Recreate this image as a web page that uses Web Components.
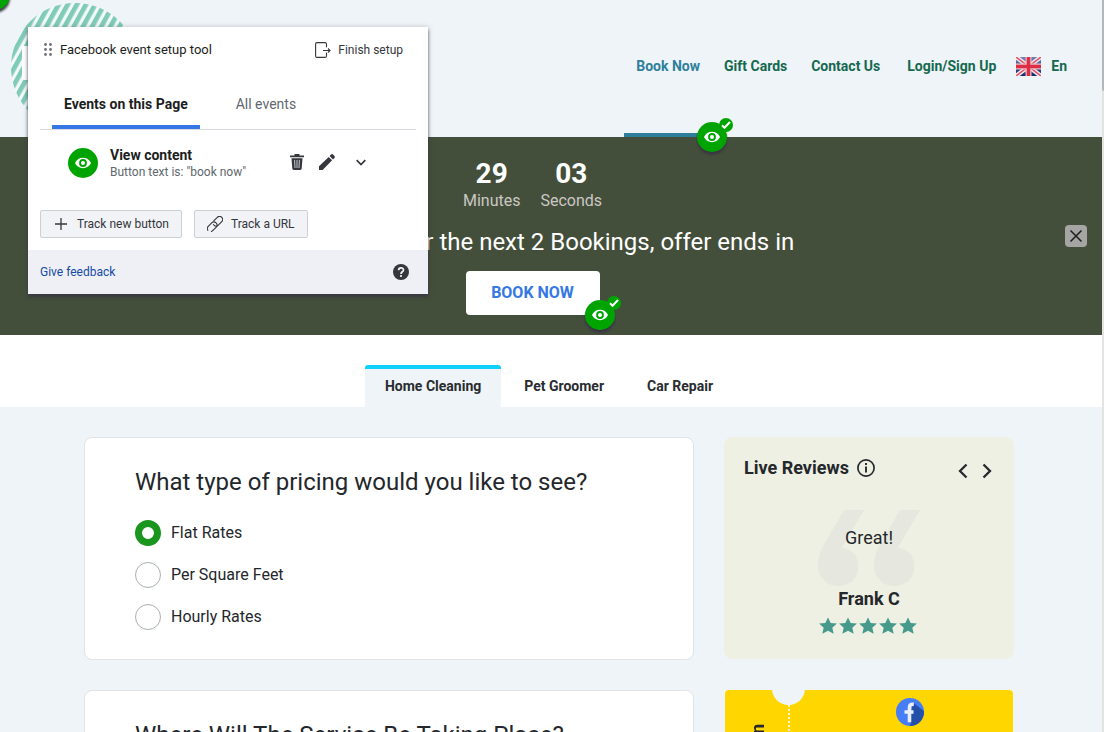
<!DOCTYPE html>
<html lang="en">
<head>
<meta charset="utf-8">
<meta name="viewport" content="width=device-width, initial-scale=1">
<title>Book Now</title>
<style>
  html, body { margin: 0; height: 100%; }
  body { font-family: Roboto, "Liberation Sans", sans-serif; color: #24272b; background: #eff4f8; overflow: hidden; }
</style>
</head>
<body>
<booking-page></booking-page>

<script>
const base = `
  *, *::before, *::after { box-sizing: border-box; }
  button { font: inherit; color: inherit; background: none; border: 0; padding: 0; margin: 0; cursor: pointer; }
  a { color: inherit; text-decoration: none; }
  h1, h2, h3, p, ul, fieldset { margin: 0; padding: 0; border: 0; }
  ul { list-style: none; }
  svg { display: block; flex: none; }
`;
function define(name, css, html) {
  const template = document.createElement('template');
  template.innerHTML = `<style>${base}${css}</style>${html}`;
  customElements.define(name, class extends HTMLElement {
    constructor() {
      super();
      this.attachShadow({ mode: 'open' }).append(template.content.cloneNode(true));
    }
  });
}

const eye = `<path d="M7 15c1.600-3.400 4.500-5.200 8-5.200s6.400 1.800 8 5.200c-1.600 3.400-4.500 5.200-8 5.200s-6.400-1.800-8-5.200z" fill="#fff"/><circle cx="15" cy="15" r="3.900" fill="#00a400"/><circle cx="15" cy="15" r="2" fill="#fff"/>`;

/* Green marker pinned on a tracked control */
define('event-marker', `
  :host { display: block; width: 37px; height: 38px; }
  svg { overflow: visible; filter: drop-shadow(0 3px 1px rgba(56,54,66,.95)); }
  .tick { filter: none; position: absolute; left: 22px; top: -4px; }
  div { position: relative; }
`, `<div><svg width="30" height="30" viewBox="0 0 30 30" aria-hidden="true"><circle cx="15" cy="15" r="15" fill="#00a400"/>${eye}</svg>
<svg class="tick" width="14" height="14" viewBox="0 0 14 14" aria-hidden="true"><circle cx="7" cy="7" r="7" fill="#00a400"/><path d="M3 7.300l2.500 2.500 5.500-5.800" fill="none" stroke="#fff" stroke-width="2"/></svg></div>`);

define('site-logo', `:host { display: block; }`, `
<svg width="128" height="128" viewBox="0 0 128 128" role="img" aria-label="Company logo">
  <defs><pattern id="s" width="8" height="8" patternUnits="userSpaceOnUse" patternTransform="rotate(29)"><rect width="8" height="8" fill="#f3f8f8"/><rect width="4.700" height="8" fill="#7fcbb8"/></pattern></defs>
  <circle cx="64" cy="64" r="64" fill="url(#s)"/><rect x="11" y="43" width="106" height="34" rx="2" fill="#fff"/>
</svg>`);

define('site-header', `
  :host { display: block; background: #eff4f8; }
  header { display: flex; align-items: stretch; justify-content: space-between; height: 137px; padding: 3px 23px 0 11px; }
  nav ul { display: flex; height: 100%; }
  li { position: relative; display: flex; }
  a { display: flex; align-items: center; padding: 0 12px 8px; font-size: 14px; line-height: 20px; font-weight: 700; color: #14694f; white-space: nowrap; }
  .current a { color: #2e7f9b; border-bottom: 4px solid #2e7f9b; padding-bottom: 4px; }
  event-marker { position: absolute; left: calc(100% - 15px); bottom: -23px; z-index: 1; }
  .login { margin-left: 3px; }
  .lang { margin-left: -4px; }
  .lang a { gap: 10px; }
`, `
<header>
  <site-logo></site-logo>
  <nav aria-label="Main"><ul>
    <li class="current"><a href="#book">Book Now</a><event-marker></event-marker></li>
    <li><a href="#gifts">Gift Cards</a></li>
    <li><a href="#contact">Contact Us</a></li>
    <li class="login"><a href="#login">Login/Sign Up</a></li>
    <li class="lang"><a href="#lang">
      <svg width="25" height="19" viewBox="0 0 50 38" aria-hidden="true">
        <defs><linearGradient id="b" x2="0" y2="1"><stop stop-color="#7580b4"/><stop offset="1" stop-color="#14296b"/></linearGradient></defs>
        <rect width="50" height="38" fill="url(#b)"/>
        <path d="M0 0l50 38M50 0L0 38" stroke="#f1e8ef" stroke-width="9"/>
        <path d="M0 0l50 38M50 0L0 38" stroke="#dc5568" stroke-width="3"/>
        <path d="M25 0v38M0 19h50" stroke="#f1bcc6" stroke-width="12"/>
        <path d="M25 0v38M0 19h50" stroke="#dc2f45" stroke-width="7"/>
      </svg>En</a></li>
  </ul></nav>
</header>`);

define('offer-banner', `
  :host { display: block; background: #444f3b; color: #fff; }
  section { display: grid; grid-template-columns: 1fr 22px; align-items: center; padding: 20px 15px 20px 0; min-height: 198px; }
  .body { display: flex; flex-direction: column; align-items: center; }
  .timer { display: flex; gap: 20px; text-align: center; padding-top: 1px; }
  .num { font-size: 28px; line-height: 32px; font-weight: 700; }
  .unit { font-size: 16px; line-height: 22px; color: #cbc7c4; }
  h1 { font-size: 24px; line-height: 32px; font-weight: 400; margin: 14px 0 13px; white-space: nowrap; }
  .book { position: relative; }
  .cta { display: block; width: 134px; height: 44px; padding-bottom: 2px; border-radius: 4px; background: #fff; color: #3578e5; font-size: 16px; font-weight: 700; }
  event-marker { position: absolute; left: calc(100% - 15px); top: 29px; }
  .close { width: 22px; height: 22px; border-radius: 4px; background: #a5a5a3; display: grid; place-items: center; }
`, `
<section aria-label="Offer">
  <div class="body">
    <div class="timer">
      <div><div class="num">29</div><div class="unit">Minutes</div></div>
      <div><div class="num">03</div><div class="unit">Seconds</div></div>
    </div>
    <h1>Get 10% Off for the next 2 Bookings, offer ends in</h1>
    <div class="book"><button class="cta">BOOK NOW</button><event-marker></event-marker></div>
  </div>
  <button class="close" aria-label="Close offer"><svg width="14" height="14" viewBox="0 0 14 14"><path d="M1.500 1.500l11 11M12.500 1.500l-11 11" stroke="#222" stroke-width="1.600"/></svg></button>
</section>`);

define('service-tabs', `
  :host { display: block; background: #fff; }
  div { display: flex; justify-content: center; gap: 3px; padding: 30px 4px 0 0; }
  button { height: 42px; padding: 0 20px 4px; border-top: 4px solid transparent; border-radius: 3px 3px 0 0; font-size: 14px; font-weight: 700; color: #292c30; }
  button[aria-selected=true] { background: #eff4f8; border-top-color: #12d0fc; }
`, `
<div role="tablist">
  <button role="tab" aria-selected="true">Home Cleaning</button>
  <button role="tab" aria-selected="false">Pet Groomer</button>
  <button role="tab" aria-selected="false">Car Repair</button>
</div>`);

define('form-card', `
  :host { display: block; background: #fff; border: 1px solid #e1e4e6; border-radius: 8px; padding: 28px 50px; }
  h2, ::slotted(h2) { margin: 0; font-size: 24px; line-height: 32px; font-weight: 400; }
`, `<slot name="title"></slot><slot></slot>`);

define('rate-options', `
  :host { display: block; margin-top: 22px; padding-bottom: 1px; }
  fieldset { display: grid; gap: 16px; }
  label { display: flex; align-items: center; gap: 10px; font-size: 16px; line-height: 26px; }
  input { appearance: none; width: 26px; height: 26px; margin: 0; border: 1px solid #a9b1ae; border-radius: 50%; background: #fff; }
  input:checked { border: 7px solid #1a961f; }
`, `
<fieldset aria-label="Pricing type">
  <label><input type="radio" name="rate" checked>Flat Rates</label>
  <label><input type="radio" name="rate">Per Square Feet</label>
  <label><input type="radio" name="rate">Hourly Rates</label>
</fieldset>`);

const star = `<svg width="18" height="18" viewBox="0 0 18 18" aria-hidden="true"><path d="M9 .5l2.700 5.500 6.200.6-4.600 4.100 1.400 6.100L9 13.700l-5.700 3.100 1.400-6.100L.1 6.600l6.200-.6z" fill="#479a8b"/></svg>`;
define('live-reviews', `
  :host { display: block; background: #eef0e3; border-radius: 8px; padding: 18px 20px 24px; }
  .top { display: flex; align-items: center; justify-content: space-between; height: 26px; }
  h2 { display: flex; align-items: center; gap: 8px; font-size: 18px; line-height: 24px; font-weight: 700; }
  .arrows { display: flex; gap: 12px; padding: 5px 1px 0 0; }
  .quote { position: relative; display: flex; flex-direction: column; align-items: center; margin-top: 29px; padding: 16px 0 0; }
  .mark { position: absolute; top: 0; left: calc(50% - 51px); }
  p { position: relative; font-size: 18px; line-height: 24px; }
  h3 { position: relative; font-size: 18px; line-height: 24px; font-weight: 700; margin-top: 37px; }
  .stars { display: flex; gap: 2px; margin: 6px 2px 0 0; }
`, `
<div class="top">
  <h2>Live Reviews <svg width="18" height="18" viewBox="0 0 18 18" aria-hidden="true"><circle cx="9" cy="9" r="8.100" fill="none" stroke="#26292d" stroke-width="1.700"/><path d="M9 7.500v6M9 4v2" stroke="#26292d" stroke-width="1.900"/></svg></h2>
  <div class="arrows">
    <button aria-label="Previous review"><svg width="12" height="16" viewBox="0 0 12 16"><path d="M9.500 1.500L3 8l6.500 6.500" fill="none" stroke="#26292d" stroke-width="2.300"/></svg></button>
    <button aria-label="Next review"><svg width="12" height="16" viewBox="0 0 12 16"><path d="M2.500 1.500L9 8l-6.500 6.500" fill="none" stroke="#26292d" stroke-width="2.300"/></svg></button>
  </div>
</div>
<div class="quote">
  <svg class="mark" width="103" height="77" viewBox="0 0 103 77" aria-hidden="true"><g fill="#e6e8df"><path d="M26 0h20L24 37.500c10 1 16.500 9 16.500 18.500C40.500 68 32 76 20.300 76S0 67 0 55.500C0 46 3.500 38.500 8 31z"/><path transform="translate(56)" d="M26 0h20L24 37.500c10 1 16.500 9 16.500 18.500C40.500 68 32 76 20.300 76S0 67 0 55.500C0 46 3.500 38.500 8 31z"/></g></svg>
  <p>Great!</p>
  <h3>Frank C</h3>
  <div class="stars" role="img" aria-label="5 stars">${star.repeat(5)}</div>
</div>`);

define('coupon-card', `
  :host { display: block; margin: 0 1px; }
  article { position: relative; display: grid; grid-template-columns: 65px 1fr; background: #ffd600; border-radius: 4px; min-height: 160px; }
  .stub { border-right: 2px dotted #fff7c8; display: flex; justify-content: center; padding: 34px 0 0 2px; }
  .stub span { writing-mode: vertical-rl; transform: rotate(180deg); font-size: 18px; line-height: 24px; font-weight: 700; align-self: start; }
  .notch { position: absolute; top: -18px; left: 47px; width: 33px; height: 33px; border-radius: 50%; background: #eff4f8; }
  .main { display: flex; justify-content: center; padding: 8px 0 0 16px; }
`, `
<article>
  <div class="stub"><span>Coupon</span></div>
  <div class="main"><svg width="28" height="28" viewBox="0 0 28 28" role="img" aria-label="Facebook">
    <defs><clipPath id="c"><circle cx="14" cy="14" r="14"/></clipPath></defs>
    <circle cx="14" cy="14" r="14" fill="#477df6"/>
    <path clip-path="url(#c)" d="M17.500 5L28 13v15H13.500l1.500-3V13z" fill="#2450a8"/>
    <path d="M17.800 6.200h-1.300c-2 0-3 1.100-3 3.100v15M8.500 14h9" fill="none" stroke="#eaf0fb" stroke-width="3.600"/>
  </svg></div>
  <div class="notch"></div>
</article>`);

const icons = {
  grip: `<svg width="8" height="13" viewBox="0 0 8 13" fill="#6d7178" aria-hidden="true"><circle cx="1.500" cy="1.500" r="1.400"/><circle cx="6.500" cy="1.500" r="1.400"/><circle cx="1.500" cy="6.500" r="1.400"/><circle cx="6.500" cy="6.500" r="1.400"/><circle cx="1.500" cy="11.500" r="1.400"/><circle cx="6.500" cy="11.500" r="1.400"/></svg>`,
  exit: `<svg width="16" height="16" viewBox="0 0 16 16" fill="none" stroke="#34373c" stroke-width="1.100" aria-hidden="true"><path d="M11.500 5.300V2A1.500 1.500 0 0 0 10 .6H2A1.500 1.500 0 0 0 .6 2v12A1.500 1.500 0 0 0 2 15.400h8a1.500 1.500 0 0 0 1.500-1.400v-3.500M8 8.500h7M13 6.500l2 2-2 2"/></svg>`,
  trash: `<svg width="14" height="16" viewBox="0 0 14 16" aria-hidden="true"><path d="M4.500 0h5v1.500H14v1.800H0V1.500h4.500zM1.500 4.300h11l-.8 10.200A1.600 1.600 0 0 1 10.200 16H3.800a1.600 1.600 0 0 1-1.500-1.500z" fill="#34373c"/><path d="M4.600 6l.4 8M7 6v8M9.400 6L9 14" stroke="#d8dadf" stroke-width=".9"/></svg>`,
  pen: `<svg width="16" height="16" viewBox="0 0 16 16" fill="#34373c" aria-hidden="true"><path d="M0 12.300L9.700 2.900l3.400 3.400L3.600 16H0zM10.600 2L12 .6a1.500 1.500 0 0 1 2.100 0l1.300 1.300a1.500 1.500 0 0 1 0 2.100L14 5.400z"/></svg>`,
  down: `<svg width="10" height="7" viewBox="0 0 10 7" fill="none" stroke="#34373c" stroke-width="1.700" aria-hidden="true"><path d="M.7 1.200L5 5.500l4.300-4.300"/></svg>`,
  plus: `<svg width="12" height="12" viewBox="0 0 12 12" stroke="#34373c" stroke-width="1.300" aria-hidden="true"><path d="M6 0v12M0 6h12"/></svg>`,
  link: `<svg width="16" height="16" viewBox="0 0 16 16" fill="none" stroke="#34373c" stroke-width="1.100" aria-hidden="true"><g transform="rotate(-45 8 8)"><rect x="-1.500" y="4.900" width="11" height="6.200" rx="3.100" stroke-dasharray="21 3 5"/><rect x="6.500" y="4.900" width="11" height="6.200" rx="3.100" stroke-dasharray="8 0 17 3"/></g></svg>`,
  help: `<svg width="16" height="16" viewBox="0 0 16 16" aria-hidden="true"><circle cx="8" cy="8" r="8" fill="#34373c"/><path d="M5.600 6.300c0-3.300 4.900-3.100 4.900-.3C10.500 7.800 8 7.800 8 9.900M8 11.100v1.800" fill="none" stroke="#f4f4f8" stroke-width="1.700"/></svg>`
};

define('event-setup-tool', `
  :host { display: block; width: 400px; background: #fff; color: #1c1e21; box-shadow: 0 3px 3px rgba(56,54,66,.8), 0 0 5px rgba(56,54,66,.25); }
  .head { display: flex; align-items: center; gap: 8px; padding: 12px 25px 0 16px; font-size: 13px; line-height: 20px; }
  .head h2 { font-size: 13px; line-height: 20px; font-weight: 400; flex: 1; padding-top: 1px; }
  .finish { display: flex; align-items: center; gap: 7px; font-size: 12px; color: #34373c; }
  .tabs { display: flex; gap: 24px; margin: 23px 12px 0; padding-left: 12px; border-bottom: 1px solid #d8dadf; }
  .tabs button { height: 46px; padding: 0 12px; font-size: 14px; border-bottom: 4px solid transparent; color: #606770; }
  .tabs button[aria-selected=true] { font-weight: 700; color: #1c1e21; border-bottom-color: #3578e5; }
  .event { display: flex; align-items: center; padding: 16px 62px 0 40px; }
  .event .text { flex: 1; margin-left: 12px; white-space: nowrap; }
  .event h3 { font-size: 14px; line-height: 18px; font-weight: 700; }
  .event p { font-size: 12px; line-height: 16px; color: #606770; }
  .acts { display: flex; align-items: center; gap: 15px; padding-bottom: 2px; }
  .acts button:last-child { margin-left: 6px; }
  .btns { display: flex; gap: 12px; padding: 30px 12px 12px; }
  .btns button { display: flex; align-items: center; gap: 8px; height: 28px; padding: 0 12px; border: 1px solid #ccd0d5; border-radius: 2px; background: #f2f3f6; font-size: 12px; color: #34373c; }
  .btns .new { gap: 10px; padding-left: 14px; }
  footer { display: flex; align-items: center; justify-content: space-between; height: 44px; padding: 0 19px 0 12px; background: #eff0f5; font-size: 12px; }
  footer a { color: #164aa5; }
`, `
<div class="head">${icons.grip}<h2>Facebook event setup tool</h2><button class="finish">${icons.exit}Finish setup</button></div>
<div class="tabs" role="tablist"><button role="tab" aria-selected="true">Events on this Page</button><button role="tab" aria-selected="false">All events</button></div>
<div class="event">
  <svg width="30" height="30" viewBox="0 0 30 30" aria-hidden="true"><circle cx="15" cy="15" r="15" fill="#00a400"/>${eye}</svg>
  <div class="text"><h3>View content</h3><p>Button text is: "book now"</p></div>
  <div class="acts"><button aria-label="Delete">${icons.trash}</button><button aria-label="Edit">${icons.pen}</button><button aria-label="Expand">${icons.down}</button></div>
</div>
<div class="btns"><button class="new">${icons.plus}Track new button</button><button>${icons.link}Track a URL</button></div>
<footer><a href="#feedback">Give feedback</a><button aria-label="Help">${icons.help}</button></footer>`);

define('booking-page', `
  :host { display: block; position: relative; height: 100vh; overflow: hidden; padding-right: 2px; background: #eff4f8; }
  main { display: grid; grid-template-columns: minmax(0, 1fr) 290px; gap: 30px; max-width: 930px; margin: 0 auto; }
  .wrap { padding: 30px 4px 30px 0; }
  .col { display: flex; flex-direction: column; gap: 30px; }
  .side { gap: 31px; }
  h2 { margin: 0; }
  event-setup-tool { position: absolute; left: 28px; top: 27px; z-index: 2; }
  .corner { position: absolute; left: -20px; top: -20px; }
  .scroll { position: absolute; right: 0; top: 0; bottom: 0; width: 2px; background: #e3e3e1; }
  .scroll::before { content: ""; display: block; height: 91px; background: #b4b6b7; border-radius: 0 0 0 2px; }
`, `
<site-header></site-header>
<offer-banner></offer-banner>
<service-tabs></service-tabs>
<div class="wrap"><main>
  <div class="col">
    <form-card><h2 slot="title">What type of pricing would you like to see?</h2><rate-options></rate-options></form-card>
    <form-card><h2 slot="title">Where Will The Service Be Taking Place?</h2></form-card>
  </div>
  <div class="col side"><live-reviews></live-reviews><coupon-card></coupon-card></div>
</main></div>
<event-marker class="corner"></event-marker>
<event-setup-tool></event-setup-tool>
<div class="scroll"></div>`);
</script>
</body>
</html>
